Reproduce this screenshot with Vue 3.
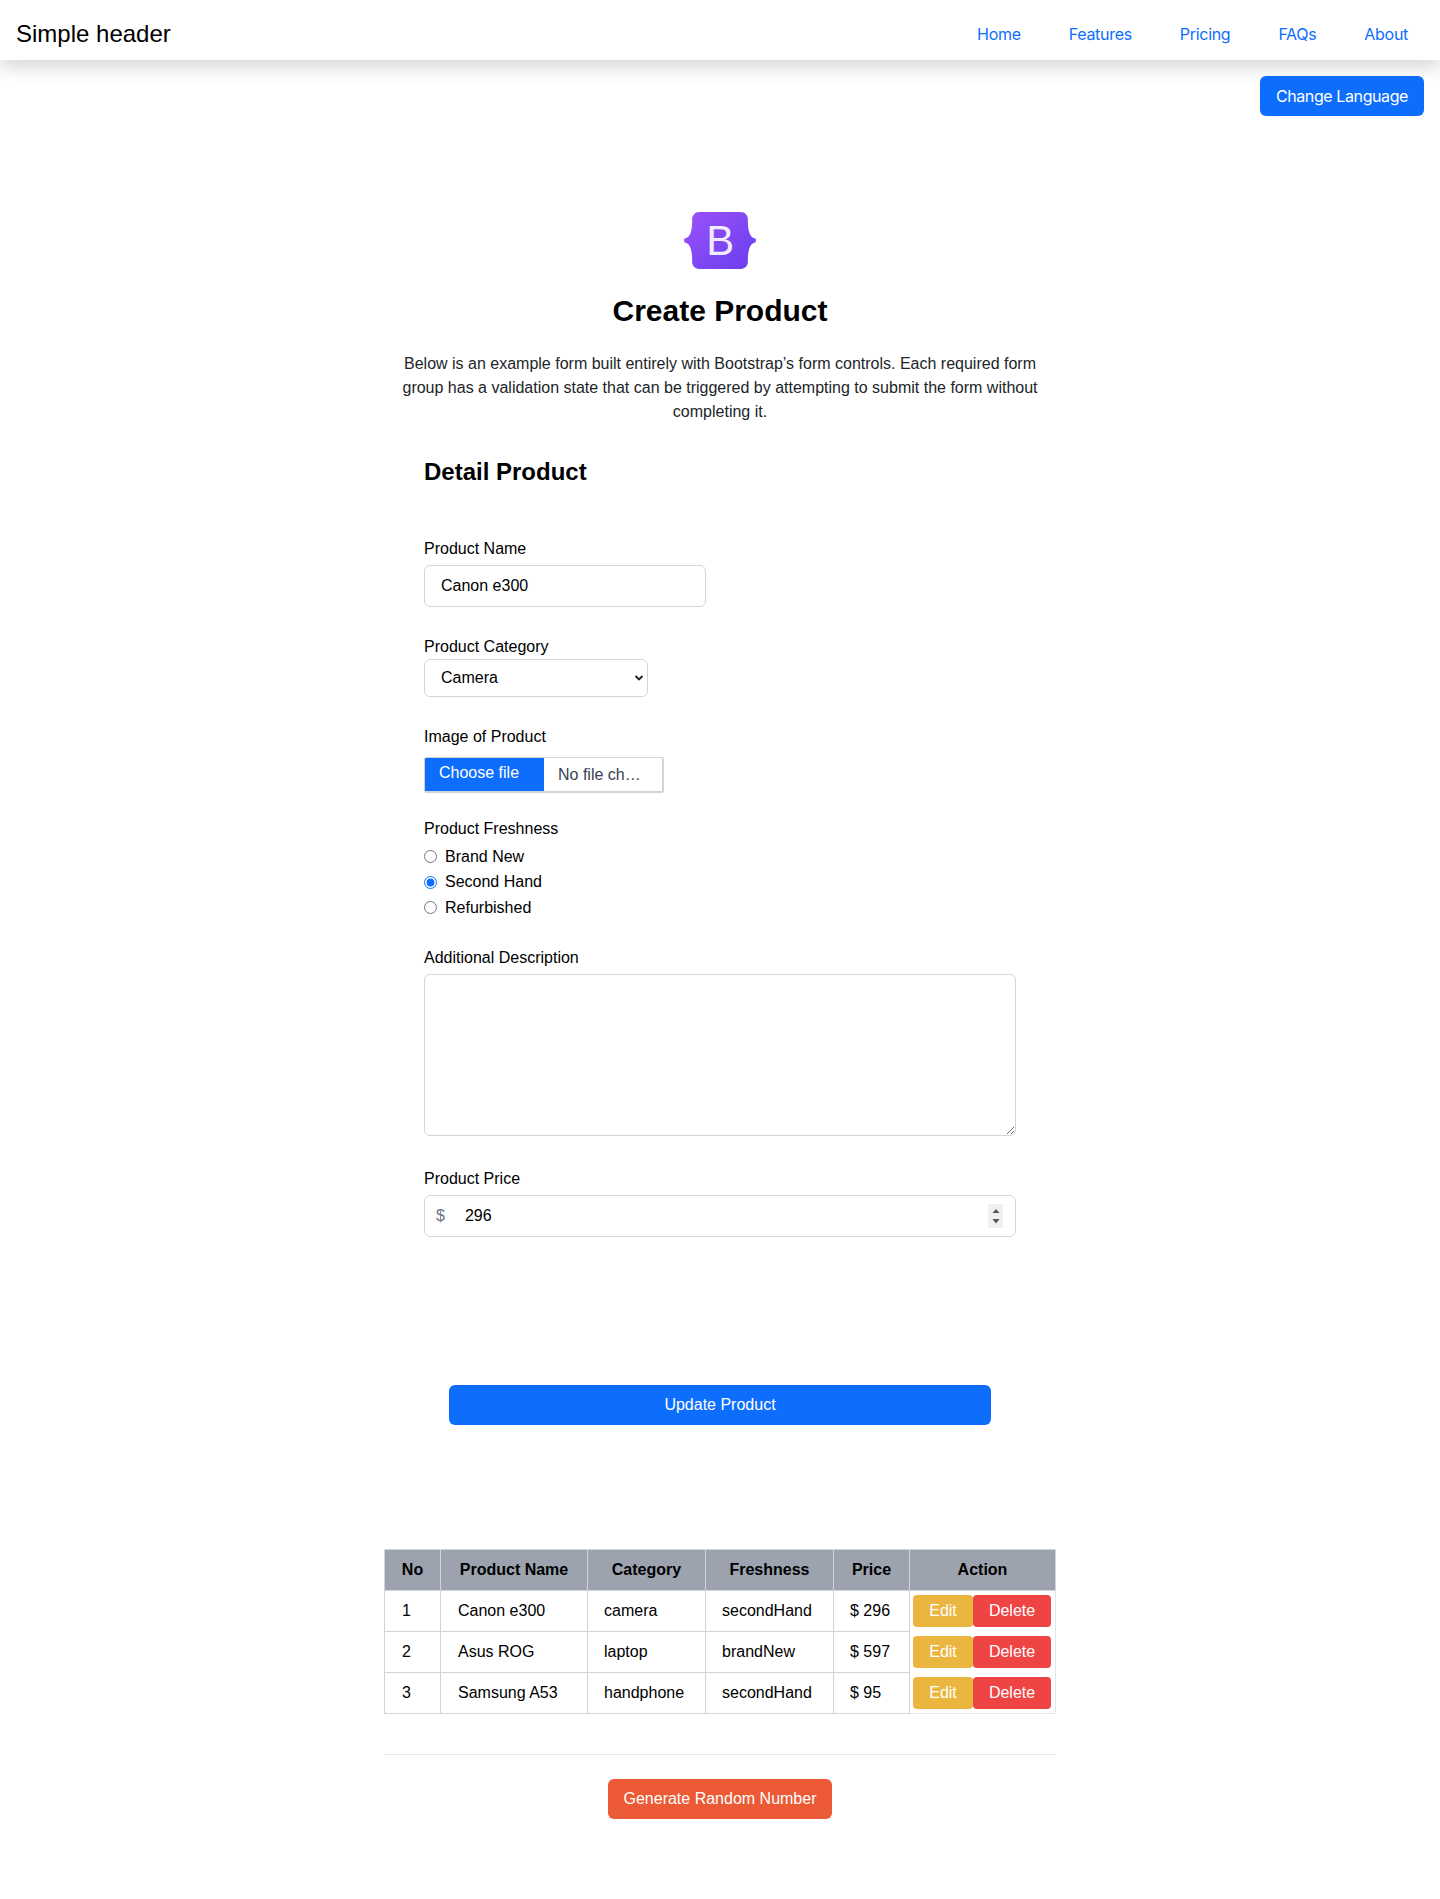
<script setup>
const links = ['Home', 'Features', 'Pricing', 'FAQs', 'About']
const rows = [
  { no: 1, name: 'Canon e300', category: 'camera', freshness: 'secondHand', price: '$ 296' },
  { no: 2, name: 'Asus ROG', category: 'laptop', freshness: 'brandNew', price: '$ 597' },
  { no: 3, name: 'Samsung A53', category: 'handphone', freshness: 'secondHand', price: '$ 95' }
]
</script>

<template>
  <div class="page">
    <header class="topbar">
      <span class="brand">Simple header</span>
      <nav class="nav">
        <a v-for="l in links" :key="l" class="nav-link">{{ l }}</a>
      </nav>
    </header>
    <div class="lang-row">
      <button class="btn-lang">Change Language</button>
    </div>

    <main class="main">
      <div class="hero">
        <svg class="logo" viewBox="0 0 118 94" width="72" height="57">
          <defs>
            <linearGradient id="lg" x1="0" y1="0" x2="1" y2="1">
              <stop offset="0" stop-color="#9a52f8" />
              <stop offset="1" stop-color="#6a3ef0" />
            </linearGradient>
          </defs>
          <path fill="url(#lg)" fill-rule="evenodd" clip-rule="evenodd" d="M24.509 0c-6.733 0-11.715 5.893-11.492 12.284.214 6.14-.064 14.092-2.066 20.577C8.943 39.365 5.547 43.485 0 44.014v5.972c5.547.529 8.943 4.649 10.951 11.153 2.002 6.485 2.28 14.437 2.066 20.577C12.794 88.106 17.776 94 24.51 94H93.5c6.733 0 11.714-5.893 11.491-12.284-.214-6.14.064-14.092 2.066-20.577 2.009-6.504 5.396-10.624 10.943-11.153v-5.972c-5.547-.529-8.934-4.649-10.943-11.153-2.002-6.484-2.28-14.437-2.066-20.577C105.214 5.894 100.233 0 93.5 0H24.508z" />
          <text class="logo-b" x="59.5" y="71" text-anchor="middle">B</text>
        </svg>
        <h1 class="title">Create Product</h1>
        <p class="lead">Below is an example form built entirely with Bootstrap’s form controls. Each required form group has a validation state that can be triggered by attempting to submit the form without completing it.</p>
      </div>

      <form class="form" @submit.prevent>
        <h2 class="section">Detail Product</h2>

        <label class="lbl lbl-name">Product Name</label>
        <input class="ctl ctl-name" type="text" value="Canon e300" />

        <label class="lbl lbl-cat">Product Category</label>
        <select class="ctl ctl-cat">
          <option>Camera</option>
        </select>

        <label class="lbl lbl-img">Image of Product</label>
        <div class="file">
          <span class="file-btn">Choose file</span>
          <span class="file-name">No file ch…</span>
        </div>

        <label class="lbl lbl-fresh">Product Freshness</label>
        <div class="radios">
          <label class="radio"><input type="radio" name="fresh" />Brand New</label>
          <label class="radio"><input type="radio" name="fresh" checked />Second Hand</label>
          <label class="radio"><input type="radio" name="fresh" />Refurbished</label>
        </div>

        <label class="lbl lbl-desc">Additional Description</label>
        <textarea class="ctl ctl-desc"></textarea>

        <label class="lbl lbl-price">Product Price</label>
        <div class="ctl price">
          <span class="dollar">$</span>
          <span class="price-val">296</span>
          <span class="spin">
            <svg width="12" height="24" viewBox="0 0 12 24">
              <path d="M2.5 9 6 5l3.5 4z" fill="#555" />
              <path d="M2.5 15 6 19.5l3.5-4.5z" fill="#555" />
            </svg>
          </span>
        </div>

        <button class="btn-update">Update Product</button>
      </form>

      <table class="tbl">
        <thead>
          <tr>
            <th class="c1">No</th>
            <th class="c2">Product Name</th>
            <th class="c3">Category</th>
            <th class="c4">Freshness</th>
            <th class="c5">Price</th>
            <th class="c6">Action</th>
          </tr>
        </thead>
        <tbody>
          <tr v-for="r in rows" :key="r.no">
            <td>{{ r.no }}</td>
            <td>{{ r.name }}</td>
            <td>{{ r.category }}</td>
            <td>{{ r.freshness }}</td>
            <td>{{ r.price }}</td>
            <td class="act">
              <div class="act-btns">
                <button class="btn-edit">Edit</button>
                <button class="btn-del">Delete</button>
              </div>
            </td>
          </tr>
        </tbody>
      </table>

      <hr class="rule" />
      <div class="gen-row">
        <button class="btn-gen">Generate Random Number</button>
      </div>
    </main>
  </div>
</template>

<style>
html, body { margin: 0; background: #fff; }
</style>

<style scoped>
.page {
  height: 1899px;
  font-family: "Liberation Sans", Arial, sans-serif;
  font-size: 16px;
  color: #000;
  overflow: hidden;
}
.topbar {
  height: 60px;
  box-sizing: border-box;
  display: flex;
  align-items: center;
  justify-content: space-between;
  padding: 8px 16px 0;
  box-shadow: 0 8px 16px rgba(0, 0, 0, 0.15);
  background: #fff;
}
.brand { font-size: 24px; line-height: 32px; }
.nav { display: flex; gap: 16px; }
.nav-link {
  font-family: Inter, sans-serif;
  font-size: 16px;
  letter-spacing: -0.3px;
  color: #0d6efd;
  padding: 8px 16px;
  line-height: 24px;
}
.lang-row {
  display: flex;
  justify-content: flex-end;
  padding: 16px 16px 0 0;
}
.btn-lang {
  width: 164px;
  height: 40px;
  background: #0d6efd;
  color: #fff;
  border: 0;
  border-radius: 6px;
  font-family: Inter, sans-serif;
  font-size: 16px;
  letter-spacing: -0.4px;
  padding: 0;
}
.main { width: 672px; margin: 0 auto; }
.hero { text-align: center; padding-top: 96px; }
.logo { display: block; margin: 0 auto; }
.logo-b {
  font-family: "Liberation Sans", Arial, sans-serif;
  font-size: 69px;
  fill: #f3ecff;
}
.title {
  margin: 24px 0 0;
  font-size: 30px;
  line-height: 36px;
  font-weight: 700;
}
.lead {
  margin: 23px 0 0;
  line-height: 24px;
  color: #212529;
}
.form {
  display: flex;
  flex-direction: column;
  align-items: flex-start;
  padding: 0 40px;
}
.section {
  margin: 32px 0 0;
  font-size: 24px;
  line-height: 32px;
  font-weight: 700;
}
.lbl { display: block; line-height: 24px; }
.lbl-name { margin-top: 49px; }
.ctl {
  box-sizing: border-box;
  border: 1px solid #d1d5db;
  border-radius: 6px;
  background: #fff;
  font-family: "Liberation Sans", Arial, sans-serif;
  font-size: 16px;
  color: #000;
  outline: none;
}
.ctl-name { width: 282px; height: 42px; margin-top: 4px; padding: 0 16px; }
.lbl-cat { margin-top: 28px; }
.ctl-cat {
  box-sizing: content-box;
  width: 194px;
  height: 34px;
  margin: 0 0 2px;
  padding: 0 12px 2px 16px;
  appearance: none;
  background-image: url("data:image/svg+xml,%3Csvg xmlns='http://www.w3.org/2000/svg' width='10' height='8' viewBox='0 0 10 8'%3E%3Cpath d='M1.5 2 5 5.5 8.5 2' fill='none' stroke='%23222' stroke-width='1.9'/%3E%3C/svg%3E");
  background-repeat: no-repeat;
  background-position: right 3px center;
}
.lbl-img { margin-top: 26px; }
.file {
  display: flex;
  width: 240px;
  height: 36px;
  box-sizing: border-box;
  margin-top: 8px;
  border: 1px solid #d1d5db;
  border-right-width: 2px;
  border-bottom-width: 2px;
  border-radius: 2px;
  overflow: hidden;
}
.file-btn {
  width: 119px;
  box-sizing: border-box;
  padding-left: 14px;
  background: #0d6efd;
  color: #fff;
  line-height: 30px;
}
.file-name { padding-left: 14px; color: #374151; line-height: 33px; }
.lbl-fresh { margin-top: 24px; }
.radios { margin-top: 3px; display: flex; flex-direction: column; }
.radio {
  display: flex;
  align-items: center;
  height: 25.5px;
  line-height: 24px;
}
.radio input {
  width: 13px;
  height: 13px;
  margin: 0 8px 0 0;
  accent-color: #0d6efd;
}
.lbl-desc { margin-top: 25.5px; }
.ctl-desc {
  display: block;
  width: 592px;
  height: 162px;
  margin-top: 4px;
  padding: 8px 12px;
}
.lbl-price { margin-top: 31px; }
.price {
  width: 592px;
  height: 42px;
  margin-top: 4px;
  display: flex;
  align-items: center;
  padding: 0 12px 0 11px;
}
.dollar { color: #6b7280; }
.price-val { margin-left: 20px; flex: 1; }
.spin {
  width: 15px;
  height: 24px;
  background: #f0f0f0;
  display: flex;
  justify-content: center;
}
.btn-update {
  align-self: center;
  width: 542px;
  height: 40px;
  margin-top: 148px;
  background: #0d6efd;
  color: #fff;
  border: 0;
  border-radius: 6px;
  font-family: "Liberation Sans", Arial, sans-serif;
  font-size: 16px;
  padding: 0;
}
.tbl {
  margin-top: 124px;
  width: 672px;
  border-collapse: collapse;
  table-layout: fixed;
  line-height: 24px;
}
.tbl th, .tbl td {
  border: 1px solid #d1d5db;
  height: 41px;
  box-sizing: border-box;
  padding: 0 16px;
  text-align: left;
  font-weight: 400;
}
.tbl td:nth-child(-n+2) { padding-left: 17px; }
.tbl th {
  background: #9ca3af;
  font-weight: 700;
  text-align: center;
  padding: 0;
}
.c1 { width: 56px; }
.c2 { width: 147px; }
.c3 { width: 118px; }
.c4 { width: 128px; }
.c5 { width: 76px; }
.tbl td.act {
  border-color: #e5e7eb;
  border-top: 0;
  border-bottom: 0;
  padding: 0 0 0 3px;
  vertical-align: middle;
}
.tbl tr:last-child td.act { border-bottom: 1px solid #e5e7eb; }
.act-btns { display: flex; }
.act-btns button {
  height: 32px;
  border: 0;
  border-radius: 4px;
  color: #fff;
  font-family: "Liberation Sans", Arial, sans-serif;
  font-size: 16px;
  padding: 0;
}
.btn-edit { width: 60px; background: #eab640; }
.btn-del { width: 78px; background: #ef4444; }
.rule {
  margin: 40px 0 0;
  border: 0;
  border-top: 1px solid #e5e7eb;
}
.gen-row { display: flex; justify-content: center; margin-top: 24px; }
.btn-gen {
  width: 224px;
  height: 40px;
  background: #eb5a35;
  color: #fff;
  border: 0;
  border-radius: 6px;
  font-family: "Liberation Sans", Arial, sans-serif;
  font-size: 16px;
  padding: 0;
}
</style>
